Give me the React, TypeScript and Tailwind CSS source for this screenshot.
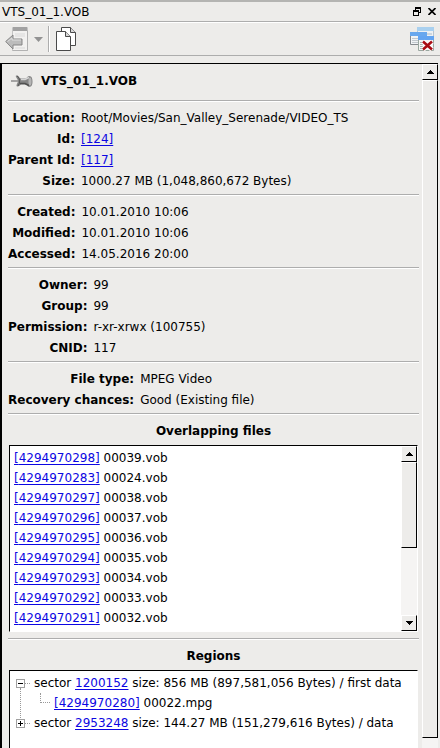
import React, { useState } from "react";

const overlappingFiles = [
    { id: "4294970298", name: "00039.vob" },
    { id: "4294970283", name: "00024.vob" },
    { id: "4294970297", name: "00038.vob" },
    { id: "4294970296", name: "00037.vob" },
    { id: "4294970295", name: "00036.vob" },
    { id: "4294970294", name: "00035.vob" },
    { id: "4294970293", name: "00034.vob" },
    { id: "4294970292", name: "00033.vob" },
    { id: "4294970291", name: "00032.vob" },
];

function Link({ children }: { children: React.ReactNode }) {
    return <a href="#" className="text-[#0c06e2] underline underline-offset-2">{children}</a>;
}

function Divider() {
    return <hr className="h-0.5 shrink-0 border-0 border-t border-b border-t-[#adadad] border-b-white" />;
}

function Field({ label, children }: { label: string; children: React.ReactNode }) {
    return (
        <>
            <dt className="text-right font-bold">{label}:</dt>
            <dd>{children}</dd>
        </>
    );
}

function FieldGroup({ children }: { children: React.ReactNode }) {
    return (
        <>
            <Divider />
            <dl className="grid shrink-0 grid-cols-[auto_1fr] gap-x-1.5 pt-1.5 pb-0.5 leading-[21px] whitespace-nowrap">{children}</dl>
        </>
    );
}

function SectionTitle({ children }: { children: React.ReactNode }) {
    return (
        <>
            <Divider />
            <h2 className="shrink-0 pt-1.5 pb-[3px] text-center leading-[21px] font-bold">{children}</h2>
        </>
    );
}

function ArrowButton({ direction }: { direction: "up" | "down" }) {
    return (
        <button aria-label={`Scroll ${direction}`} className="flex h-4 w-full shrink-0 items-center justify-center border border-t-white border-r-black border-b-black border-l-white bg-[#edecea]">
            <svg width="7" height="4" viewBox="0 0 7 4" shapeRendering="crispEdges">
                {direction === "up"
                    ? <path d="M3 0h1v1h1v1h1v1h1v1H0V3h1V2h1V1h1z" />
                    : <path d="M0 0h7v1H6v1H5v1H4v1H3V3H2V2H1V1H0z" />}
            </svg>
        </button>
    );
}

function ToggleBox({ open, label, onClick }: { open: boolean; label: string; onClick: () => void }) {
    return (
        <button aria-label={label} aria-expanded={open} onClick={onClick} className="flex h-[9px] w-[9px] shrink-0 items-center justify-center border border-[#a0a0a0] bg-white">
            <svg width="5" height="5" viewBox="0 0 5 5" shapeRendering="crispEdges">
                <path d={open ? "M0 2h5v1H0z" : "M0 2h2V0h1v2h2v1H3v2H2V3H0z"} />
            </svg>
        </button>
    );
}

function BackIcon() {
    return (
        <svg width="24" height="26" viewBox="0 0 24 26">
            <path d="M7.500 1.500h15v23h-15z" fill="#f2f1f0" stroke="#c4c4c4" />
            <path d="M7.500 24.500h15v-20" fill="none" stroke="#b2b2b2" />
            <path d="M8 1h14v4H8z" fill="#a2a2a2" />
            <path d="M10 8h10M10 10h10M10 22h10" stroke="#d9d9d9" />
            <path d="M.700 15.500 8 9v4h9v6H8v4z" fill="#bcbcbc" stroke="#858585" />
            <path d="M2.500 15.500 7 12v2h9" fill="none" stroke="#dedede" />
        </svg>
    );
}

function CopyIcon() {
    return (
        <svg width="22" height="26" viewBox="0 0 22 26" stroke="#4a4a4a">
            <path d="M6.500 1.500h9l5 5v13h-14z" fill="#fff" />
            <path d="M15.500 1.500v5h5" fill="#d8d8d8" />
            <path d="M1.500 5.500h9l5 5v14h-14z" fill="#fff" />
            <path d="M10.500 5.500v5h5" fill="#d8d8d8" />
        </svg>
    );
}

function CloseTabsIcon() {
    return (
        <svg width="26" height="26" viewBox="0 0 26 26">
            <path d="M8.500 1.500h16v12h-16z" fill="#eef1f4" stroke="#b9c4cd" />
            <path d="M8 1h17v4H8z" fill="#a9d0ef" />
            <path d="M11 8h12" stroke="#aebdc9" />
            <path d="M1.500 7.500h16v11h-16z" fill="#f1f3f5" stroke="#85898e" />
            <path d="M1 6h17v4H1z" fill="#68a7ee" />
            <path d="M3 12.500h13M3 14.500h13M3 16.500h13" stroke="#c2c8ce" />
            <path d="M9.500 12.500h15v12h-15z" fill="#f5f5f4" stroke="#9aa7a0" />
            <path d="M9 10h16v4H9z" fill="#63a4f1" />
            <path d="M11 16.500h4M11 18.500h4M11 20.500h4M11 22.500h4" stroke="#a6b6ad" />
            <path d="m14 15.500 9 8m0-8-9 8" stroke="#fff" strokeWidth="5" />
            <path d="m14 15.500 9 8m0-8-9 8" stroke="#a80d12" strokeWidth="2.600" />
        </svg>
    );
}

function PinIcon() {
    return (
        <svg width="22" height="16" viewBox="0 0 22 16">
            <path d="M0 8h8" stroke="#8c8c8c" strokeWidth="1.500" />
            <path d="M5 2.500C8 2 8 5 10 5.500h4c2 0 2-2 4-2.500 3 0 3.500 3 3.500 5.500S21 14 18 14c-2-1-2-2-4-2.500h-4C9 12 8 14 6 13.500 4.500 12 7 10 7 8S4 4 5 2.500z" fill="#858585" />
            <path d="M6 3c2 1 3 4 2.500 7L7 13" fill="none" stroke="#555" />
            <path d="M10 6.500h4l4-2" fill="none" stroke="#d4d4d4" strokeWidth="1.500" />
            <path d="M9 10.500h5l4 2" fill="none" stroke="#505050" strokeWidth="1.500" />
            <ellipse cx="19" cy="8.500" rx="1.500" ry="4" fill="#b5b5b5" />
        </svg>
    );
}

export default function App() {
    const [firstOpen, setFirstOpen] = useState<boolean>(true);
    const [secondOpen, setSecondOpen] = useState<boolean>(false);

    return (
        <div className="flex h-screen w-full flex-col overflow-hidden bg-[#edecea] font-['DejaVu_Sans',sans-serif] text-xs text-black">
            <header className="flex h-[22px] shrink-0 items-center justify-between border-t-2 border-b border-t-[#b4b4b2] border-b-[#adadad] pr-1 pl-0.5">
                <span className="leading-5">VTS_01_1.VOB</span>
                <div className="flex items-center gap-[7px]">
                    <button aria-label="Restore window">
                        <svg width="8" height="9" viewBox="0 0 8 9" shapeRendering="crispEdges">
                            <path d="M2 0h6v6H6V5h1V2H3v1H2zM0 3h6v6H0zm1 2v3h4V5z" fillRule="evenodd" />
                        </svg>
                    </button>
                    <button aria-label="Close window">
                        <svg width="8" height="7" viewBox="0 0 8 7" stroke="#000" strokeWidth="1.600">
                            <path d="m.500 0 7 7m0-7-7 7" />
                        </svg>
                    </button>
                </div>
            </header>

            <div className="flex h-[34px] shrink-0 items-center justify-between border-t border-b border-t-white border-b-[#adadad] px-[5px]">
                <div className="flex items-center">
                    <button aria-label="Back"><BackIcon /></button>
                    <button aria-label="Back history" className="ml-[5px]">
                        <svg width="9" height="5" viewBox="0 0 9 5"><path d="M0 0h9L4.500 5z" fill="#929292" /></svg>
                    </button>
                    <span className="ml-[5px] h-[26px] w-0.5 border-r border-l border-r-white border-l-[#adadad]" />
                    <button aria-label="Copy" className="ml-[5px]"><CopyIcon /></button>
                </div>
                <button aria-label="Close all panels"><CloseTabsIcon /></button>
            </div>

            <div className="mt-[7px] mr-0.5 flex min-h-0 flex-1 border-t border-l-2 border-black">
                <main className="flex min-w-0 flex-1 flex-col overflow-hidden pr-[3px] pl-1.5">
                    <div className="flex h-9 shrink-0 items-center gap-2 pb-0.5 pl-[3px]">
                        <PinIcon />
                        <h1 className="font-bold">VTS_01_1.VOB</h1>
                    </div>
                    <FieldGroup>
                        <Field label="Location">Root/Movies/San_Valley_Serenade/VIDEO_TS</Field>
                        <Field label="Id"><Link>[124]</Link></Field>
                        <Field label="Parent Id"><Link>[117]</Link></Field>
                        <Field label="Size">1000.27 MB (1,048,860,672 Bytes)</Field>
                    </FieldGroup>
                    <FieldGroup>
                        <Field label="Created">10.01.2010 10:06</Field>
                        <Field label="Modified">10.01.2010 10:06</Field>
                        <Field label="Accessed">14.05.2016 20:00</Field>
                    </FieldGroup>
                    <FieldGroup>
                        <Field label="Owner">99</Field>
                        <Field label="Group">99</Field>
                        <Field label="Permission">r-xr-xrwx (100755)</Field>
                        <Field label="CNID">117</Field>
                    </FieldGroup>
                    <FieldGroup>
                        <Field label="File type">MPEG Video</Field>
                        <Field label="Recovery chances">Good (Existing file)</Field>
                    </FieldGroup>

                    <SectionTitle>Overlapping files</SectionTitle>
                    <div className="mx-px mb-1.5 flex h-[187px] shrink-0 border border-t-black border-r-white border-b-white border-l-black bg-white">
                        <ul className="min-w-0 flex-1 overflow-hidden pt-0.5 pl-1 leading-5">
                            {overlappingFiles.map((file) => (
                                <li key={file.id}><Link>[{file.id}]</Link> {file.name}</li>
                            ))}
                        </ul>
                        <div className="flex w-4 flex-col bg-[#f5f4f3]">
                            <ArrowButton direction="up" />
                            <div className="h-[86px] border border-t-white border-r-black border-b-black border-l-white bg-[#edecea]" />
                            <div className="flex-1" />
                            <ArrowButton direction="down" />
                        </div>
                    </div>

                    <SectionTitle>Regions</SectionTitle>
                    <div className="mx-px flex-1 border-t border-r border-l border-t-black border-r-white border-l-black bg-white pt-0.5 pl-1.5 leading-5 whitespace-nowrap">
                        <div className="flex h-5 items-center">
                            <ToggleBox open={firstOpen} label="Toggle sector 1200152" onClick={() => setFirstOpen(!firstOpen)} />
                            <span className="mr-1 w-[5px] border-t border-dotted border-[#999]" />
                            <span>sector <Link>1200152</Link> size: 856 MB (897,581,056 Bytes) / first data</span>
                        </div>
                        {firstOpen && (
                            <div className="flex h-5">
                                <span className="-mt-[5px] ml-1 h-[30px] w-5 border-l border-dotted border-[#999]" />
                                <span className="mr-1 h-[10px] w-2.5 border-b border-l border-dotted border-[#999]" />
                                <span><Link>[4294970280]</Link> 00022.mpg</span>
                            </div>
                        )}
                        <div className="flex h-5 items-center">
                            <ToggleBox open={secondOpen} label="Toggle sector 2953248" onClick={() => setSecondOpen(!secondOpen)} />
                            <span className="mr-1 w-[5px] border-t border-dotted border-[#999]" />
                            <span>sector <Link>2953248</Link> size: 144.27 MB (151,279,616 Bytes) / data</span>
                        </div>
                    </div>
                </main>
                <div className="flex w-4 flex-col bg-[#f5f4f3]">
                    <ArrowButton direction="up" />
                    <div className="flex-1 border border-t-white border-r-black border-b-black border-l-white bg-[#edecea]" />
                    <div className="h-2.5" />
                </div>
            </div>
        </div>
    );
}
